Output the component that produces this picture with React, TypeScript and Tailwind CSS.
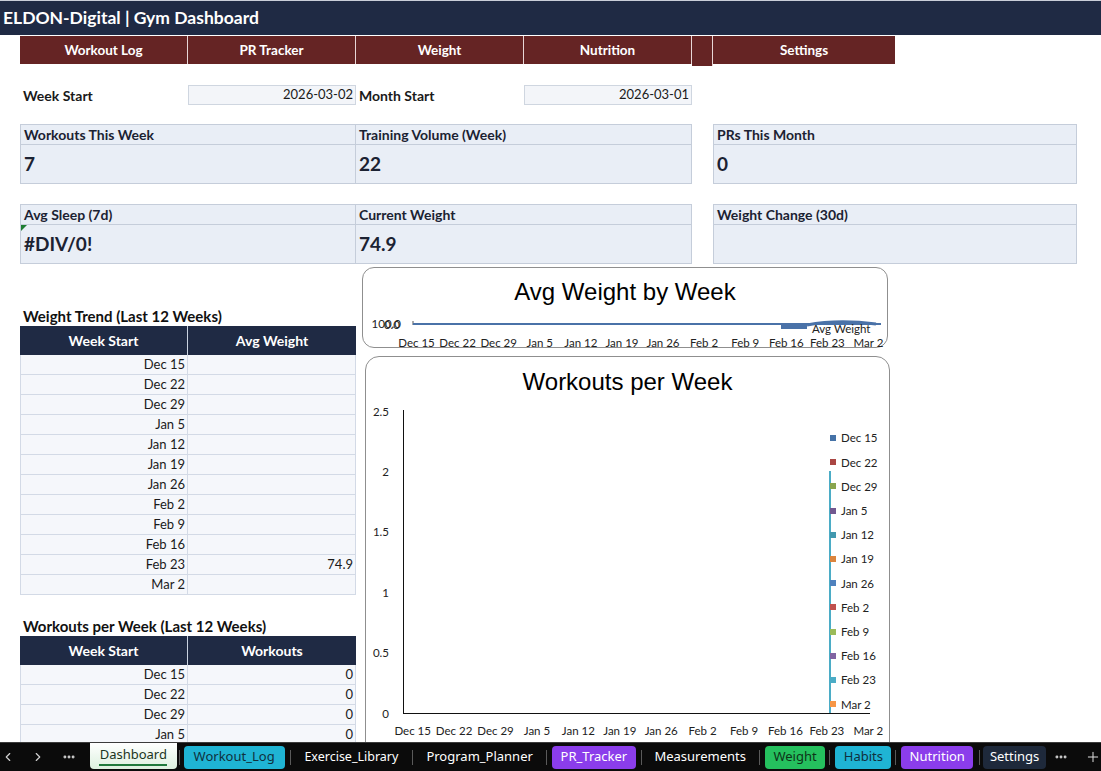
import { ChevronLeft, ChevronRight, Ellipsis, Plus } from "lucide-react";

const weeks = [
  "Dec 15",
  "Dec 22",
  "Dec 29",
  "Jan 5",
  "Jan 12",
  "Jan 19",
  "Jan 26",
  "Feb 2",
  "Feb 9",
  "Feb 16",
  "Feb 23",
  "Mar 2",
];

// one class per legend entry, written out in full so tailwind picks them up
const legendColors = [
  "bg-[#4572a7]",
  "bg-[#aa4643]",
  "bg-[#89a54e]",
  "bg-[#71588f]",
  "bg-[#4198af]",
  "bg-[#db843d]",
  "bg-[#4f81bd]",
  "bg-[#c0504d]",
  "bg-[#9bbb59]",
  "bg-[#8064a2]",
  "bg-[#4bacc6]",
  "bg-[#f79646]",
];

const weightRows = weeks.map((w) => ({ week: w, value: w === "Feb 23" ? "74.9" : "" }));

function Kpi({
  label,
  value,
  width,
  noLeft,
  flag,
}: {
  label: string;
  value: string;
  width: string;
  noLeft?: boolean;
  flag?: boolean;
}) {
  return (
    <div
      className={`${width} h-[60px] border border-[#c5cdda] bg-[#e9eef6] ${noLeft ? "border-l-0" : ""} flex flex-col`}
    >
      <div className="h-[20px] border-b border-[#c5cdda] pl-[3px] flex items-center text-[14px] font-bold text-[#1b2232]">
        {label}
      </div>
      <div className="relative flex-1 pl-[3px] flex items-center text-[19px] font-bold text-[#1b2232]">
        {flag && (
          <div className="absolute left-0 top-0 w-0 h-0 border-t-[6px] border-t-[#1e7d32] border-r-[6px] border-r-transparent" />
        )}
        {value}
      </div>
    </div>
  );
}

function DataTable({
  title,
  col2,
  rows,
}: {
  title: string;
  col2: string;
  rows: { week: string; value: string }[];
}) {
  return (
    <div>
      <div className="h-[20px] pl-[3px] flex items-center text-[15px] font-bold text-[#111]">{title}</div>
      <div className="h-[29px] flex bg-[#1f2a44] text-white text-[14px] font-bold">
        <div className="w-[168px] border-r border-[#c9d2e0] flex items-center justify-center">Week Start</div>
        <div className="w-[168px] flex items-center justify-center">{col2}</div>
      </div>
      {rows.map((r) => (
        <div
          key={r.week}
          className="h-[20px] flex bg-[#f5f7fb] border-b border-x border-[#d3dae6] text-[13px] text-[#1a1a1a]"
        >
          <div className="w-[167px] border-r border-[#d3dae6] flex items-center justify-end pr-[2px]">{r.week}</div>
          <div className="flex-1 flex items-center justify-end pr-[2px]">{r.value}</div>
        </div>
      ))}
    </div>
  );
}

function WeightChart() {
  return (
    <div className="relative w-[526px] h-[81px] border border-[#8f8f8f] rounded-[12px] bg-white">
      <div className="pt-[10px] text-center text-[24px] leading-[28px] text-black font-['Liberation_Sans',Arial,sans-serif]">
        Avg Weight by Week
      </div>
      <svg className="absolute left-0 top-0" width="526" height="81">
        <line x1="50" y1="53" x2="50" y2="57" stroke="#555" strokeWidth="1" />
        <line x1="50" y1="56" x2="518" y2="56" stroke="#4a72a8" strokeWidth="2" />
        <rect x="418" y="56" width="26" height="5" fill="#4a72a8" />
        <path d="M444 57 Q475 51 513 56" stroke="#4a72a8" strokeWidth="3" fill="none" />
      </svg>
      <div className="absolute left-[4px] top-[48px] w-[34px] h-[15px] text-[11.5px] leading-[15px] text-[#222]">
        <span className="absolute right-0 top-0">100.0</span>
        <span className="absolute right-[1px] top-[1px]">0.0</span>
      </div>
      <div className="absolute left-[449px] top-[53px] text-[11.5px] leading-[15px] text-[#222]">Avg Weight</div>
      <div className="absolute left-[33px] top-[67px] w-[493px] grid grid-cols-12 text-[11.5px] leading-[15px] text-[#222]">
        {weeks.map((w) => (
          <div key={w} className="text-center whitespace-nowrap">
            {w}
          </div>
        ))}
      </div>
    </div>
  );
}

function WorkoutsChart() {
  const yTicks = [
    { label: "2.5", top: 47 },
    { label: "2", top: 107 },
    { label: "1.5", top: 167 },
    { label: "1", top: 228 },
    { label: "0.5", top: 288 },
    { label: "0", top: 349 },
  ];
  return (
    <div className="relative ml-[3px] mt-[8px] w-[525px] h-[400px] border border-[#8f8f8f] rounded-[14px] bg-white">
      <div className="pt-[11px] text-center text-[24px] leading-[28px] text-black font-['Liberation_Sans',Arial,sans-serif]">
        Workouts per Week
      </div>
      {yTicks.map((t) => (
        <div
          key={t.label}
          className="absolute right-[500px] text-[11.5px] leading-[15px] text-[#222]"
          style={{ top: t.top }}
        >
          {t.label}
        </div>
      ))}
      <svg className="absolute left-0 top-0" width="525" height="400">
        <line x1="37.5" y1="53" x2="37.5" y2="356" stroke="#111" strokeWidth="1" />
        <line x1="37" y1="356.5" x2="504" y2="356.5" stroke="#111" strokeWidth="1" />
        <line x1="464" y1="114" x2="464" y2="356" stroke="#4bacc6" strokeWidth="2" />
      </svg>
      <div className="absolute left-[464px] top-[69px] flex flex-col">
        {weeks.map((w, i) => (
          <div key={w} className="h-[24.2px] flex items-center gap-[5px] text-[11.5px] text-[#222]">
            <div className={`w-[6px] h-[6px] ${legendColors[i]}`} />
            <span>{w}</span>
          </div>
        ))}
      </div>
      <div className="absolute left-[26px] top-[366px] w-[497px] grid grid-cols-12 text-[11.5px] leading-[15px] text-[#222]">
        {weeks.map((w) => (
          <div key={w} className="text-center whitespace-nowrap">
            {w}
          </div>
        ))}
      </div>
    </div>
  );
}

function Sep({ ml }: { ml: string }) {
  return <div className={`${ml} w-px h-[15px] shrink-0 bg-[#5a5a5a]`} />;
}

function TabBar() {
  return (
    <div className="h-[29px] shrink-0 bg-[#0b0b0b] border-t border-[#3c3c3c] flex items-center text-[13px] text-white font-['Noto_Sans','Open_Sans',sans-serif] whitespace-nowrap">
      <div className="w-[16px] flex justify-center text-[#d0d0d0]">
        <ChevronLeft size={14} strokeWidth={2} />
      </div>
      <div className="ml-[14px] w-[16px] flex justify-center text-[#d0d0d0]">
        <ChevronRight size={14} strokeWidth={2} />
      </div>
      <div className="ml-[15px] w-[16px] flex justify-center text-[#d0d0d0]">
        <Ellipsis size={14} strokeWidth={3} />
      </div>
      <div className="ml-[13px] w-[87px] h-[26px] -mt-[3px] rounded-b-[4px] bg-gradient-to-b from-white to-[#dcf1df] flex flex-col items-center justify-center text-[#1b3522]">
        <span className="leading-[17px]">Dashboard</span>
        <div className="w-[68px] h-[2px] bg-[#1f7a3c] mt-[1px]" />
      </div>
      <Sep ml="ml-[2px]" />
      <div className="ml-[4px] w-[101px] h-[23px] rounded-[4px] bg-[#1fb4d4] text-[#10303d] flex items-center justify-center">
        Workout_Log
      </div>
      <Sep ml="ml-[5px]" />
      <div className="w-[122px] flex justify-center text-[12.5px]">Exercise_Library</div>
      <Sep ml="ml-0" />
      <div className="w-[133px] flex justify-center">Program_Planner</div>
      <Sep ml="ml-0" />
      <div className="ml-[5px] w-[84px] h-[23px] rounded-[4px] bg-[#8b3deb] flex items-center justify-center">
        PR_Tracker
      </div>
      <Sep ml="ml-[5px]" />
      <div className="w-[117px] flex justify-center">Measurements</div>
      <Sep ml="ml-0" />
      <div className="ml-[5px] w-[61px] h-[23px] rounded-[4px] bg-[#25c05e] text-[#0e3318] flex items-center justify-center">
        Weight
      </div>
      <Sep ml="ml-[4px]" />
      <div className="ml-[5px] w-[56px] h-[23px] rounded-[4px] bg-[#1fb4d4] text-[#10303d] flex items-center justify-center">
        Habits
      </div>
      <Sep ml="ml-[4px]" />
      <div className="ml-[5px] w-[72px] h-[23px] rounded-[4px] bg-[#8b3deb] flex items-center justify-center">
        Nutrition
      </div>
      <Sep ml="ml-[6px]" />
      <div className="ml-[3px] w-[63px] h-[23px] rounded-[4px] bg-[#1e293b] flex items-center justify-center">
        Settings
      </div>
      <div className="ml-[7px] w-[16px] flex justify-center text-[#d0d0d0]">
        <Ellipsis size={14} strokeWidth={3} />
      </div>
      <div className="ml-[16px] w-[16px] flex justify-center text-[#e0e0e0]">
        <Plus size={16} strokeWidth={1.5} />
      </div>
    </div>
  );
}

export default function App() {
  const navItems = ["Workout Log", "PR Tracker", "Weight", "Nutrition"];
  return (
    <div className="w-[1101px] h-[771px] flex flex-col overflow-hidden bg-white font-['Lato','Liberation_Sans',sans-serif]">
      <div className="flex-1 overflow-hidden">
        {/* title bar */}
        <div className="h-px bg-[#c9ced8]" />
        <div className="h-[34px] bg-[#1f2a44] pl-[3px] flex items-center text-white text-[17.5px] font-bold">
          ELDON-Digital | Gym Dashboard
        </div>

        {/* nav buttons */}
        <div className="mt-px ml-[20px] h-[28px] flex items-start text-white text-[13.5px] font-bold">
          {navItems.map((n) => (
            <div
              key={n}
              className="w-[168px] h-[28px] bg-[#652424] border-r border-[#e8d6d6] flex items-center justify-center"
            >
              {n}
            </div>
          ))}
          <div className="w-[21px] h-[30px] bg-[#652424] border-r border-[#e8d6d6]" />
          <div className="w-[182px] h-[28px] bg-[#652424] flex items-center justify-center">Settings</div>
        </div>

        {/* date inputs */}
        <div className="mt-[21px] ml-[20px] h-[20px] flex text-[13px] text-[#1a1a1a]">
          <div className="w-[168px] pl-[3px] flex items-center font-bold text-[14px]">Week Start</div>
          <div className="w-[168px] bg-[#f3f5f9] border border-[#cfd6e0] flex items-center justify-end pr-[2px]">
            2026-03-02
          </div>
          <div className="w-[168px] pl-[3px] flex items-center font-bold text-[14px]">Month Start</div>
          <div className="w-[168px] bg-[#f3f5f9] border border-[#cfd6e0] flex items-center justify-end pr-[2px]">
            2026-03-01
          </div>
        </div>

        {/* KPI rows */}
        <div className="mt-[19px] ml-[20px] flex">
          <Kpi label="Workouts This Week" value="7" width="w-[336px]" />
          <Kpi label="Training Volume (Week)" value="22" width="w-[336px]" noLeft />
          <div className="w-[21px]" />
          <Kpi label="PRs This Month" value="0" width="w-[364px]" />
        </div>
        <div className="mt-[20px] ml-[20px] flex">
          <Kpi label="Avg Sleep (7d)" value="#DIV/0!" width="w-[336px]" flag />
          <Kpi label="Current Weight" value="74.9" width="w-[336px]" noLeft />
          <div className="w-[21px]" />
          <Kpi label="Weight Change (30d)" value="" width="w-[364px]" />
        </div>

        {/* tables and charts */}
        <div className="ml-[20px] flex items-start">
          <div className="w-[336px] pt-[42px]">
            <DataTable title="Weight Trend (Last 12 Weeks)" col2="Avg Weight" rows={weightRows} />
            <div className="mt-[21px]">
              <DataTable
                title="Workouts per Week (Last 12 Weeks)"
                col2="Workouts"
                rows={weeks.map((w) => ({ week: w, value: "0" }))}
              />
            </div>
          </div>
          <div className="ml-[6px] pt-[3px]">
            <WeightChart />
            <WorkoutsChart />
          </div>
        </div>
      </div>
      <TabBar />
    </div>
  );
}
